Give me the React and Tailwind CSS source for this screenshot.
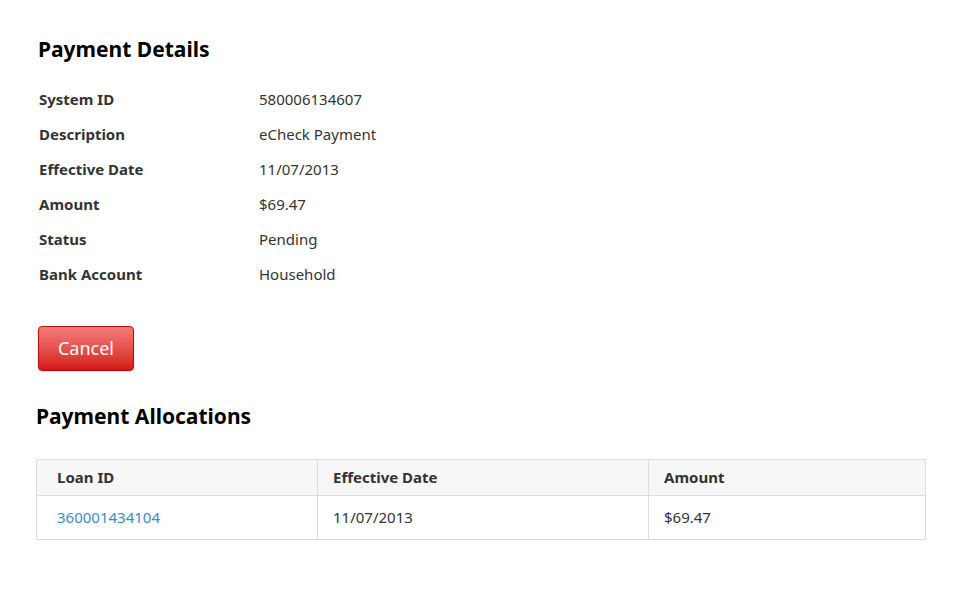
const rows = [
  ['System ID', '580006134607'],
  ['Description', 'eCheck Payment'],
  ['Effective Date', '11/07/2013'],
  ['Amount', '$69.47'],
  ['Status', 'Pending'],
  ['Bank Account', 'Household'],
];

export default function App() {
  return (
    <div className="bg-white min-h-[595px] text-[#333] font-['Liberation_Sans',Arial,sans-serif] pl-[36px] pr-[35px] pt-[36px]">
      <h2 className="text-[21px] font-bold text-black pl-[2px] leading-[26px]">Payment Details</h2>
      <div className="mt-[20px] pl-[3px]">
        {rows.map(([k, v]) => (
          <div key={k} className="flex h-[35px] items-center text-[15px]">
            <div className="w-[220px] font-bold">{k}</div>
            <div>{v}</div>
          </div>
        ))}
      </div>
      <button className="mt-[34px] ml-[2px] w-[96px] h-[45px] rounded-[4px] border border-[#b80d0d] bg-gradient-to-b from-[#f47a7a] to-[#d31212] text-white text-[18px] shadow-sm">
        Cancel
      </button>
      <h2 className="mt-[32px] text-[21px] font-bold text-black leading-[26px]">Payment Allocations</h2>
      <table className="mt-[30px] w-full border border-[#ddd] border-collapse text-[15px]">
        <thead>
          <tr className="bg-[#f7f7f7] h-[36px] text-left">
            <th className="border border-[#ddd] w-[281px] pl-[20px] font-bold">Loan ID</th>
            <th className="border border-[#ddd] w-[331px] pl-[15px] font-bold">Effective Date</th>
            <th className="border border-[#ddd] pl-[15px] font-bold">Amount</th>
          </tr>
        </thead>
        <tbody>
          <tr className="h-[44px]">
            <td className="border border-[#ddd] pl-[20px] text-[#3a8cc8]">360001434104</td>
            <td className="border border-[#ddd] pl-[15px]">11/07/2013</td>
            <td className="border border-[#ddd] pl-[15px]">$69.47</td>
          </tr>
        </tbody>
      </table>
    </div>
  );
}
